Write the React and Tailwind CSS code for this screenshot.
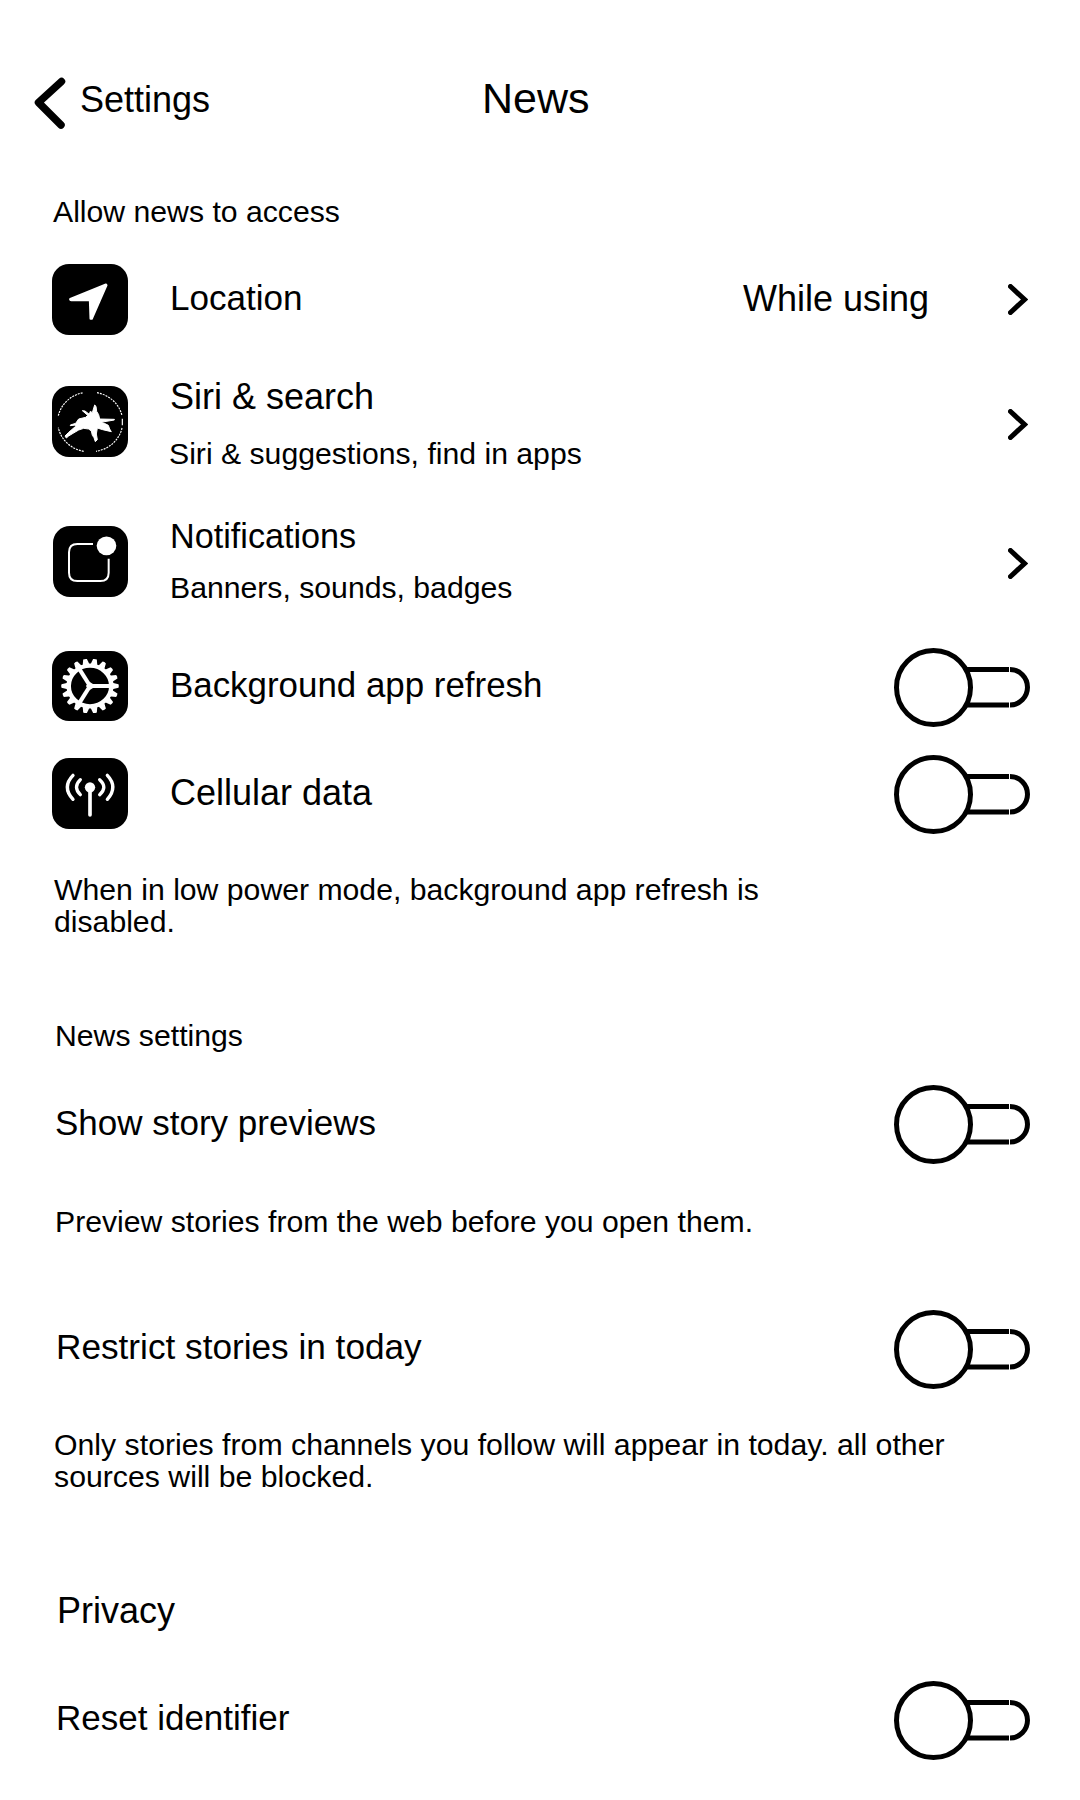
import React from "react";

function Tile({ className, viewBox, children }) {
  return (
    <div className={"shrink-0 overflow-hidden rounded-[17px] bg-black " + className}>
      <svg viewBox={viewBox} preserveAspectRatio="none" className="block h-full w-full">
        {children}
      </svg>
    </div>
  );
}

function LocationTile() {
  return (
    <Tile className="h-[71px] w-[76px]" viewBox="36 42 228 213">
      <path
        d="M198 104 L91 147 Q90 150 94 150 L150 150 L152 206 L155 206 L199 106 Z"
        fill="#fff"
        stroke="#fff"
        strokeWidth="7"
        strokeLinejoin="round"
      />
    </Tile>
  );
}

function SiriTile() {
  return (
    <Tile className="h-[71px] w-[76px]" viewBox="36 48 228 213">
      <g fill="none" stroke="#fff" strokeWidth="3.500" strokeDasharray="6 3">
        <path d="M55 137 A96 90 0 0 1 130 68" />
        <path d="M171 68 A96 90 0 0 1 246 137" />
        <path d="M247 146 V166" strokeDasharray="none" />
        <path d="M246 174 A96 90 0 0 1 168 244" />
        <path d="M131 244 A96 90 0 0 1 55 173" />
      </g>
      <path
        d="M164 105 L168 109 L170 124 L176 134 L179 147 L223 148 L223 150 L182 157 L193 160 L205 166 L209 177 L214 185 L188 179 L172 174 L169 192 L172 209 L166 215 L162 203 L157 196 L154 183 L146 177 L131 175 L116 180 L99 190 L86 198 L79 204 L75 198 L86 187 L107 169 L107 165 L91 167 L91 165 L107 160 L116 147 L137 142 L143 136 L127 122 L135 123 L148 133 L151 124 L157 128 Z"
        fill="#fff"
        stroke="#fff"
        strokeWidth="3"
        strokeLinejoin="round"
      />
    </Tile>
  );
}

function NotificationsTile() {
  return (
    <Tile className="ml-px h-[71px] w-[75px]" viewBox="39 48 225 213">
      <path
        d="M159 102 H112 Q87 102 87 127 V188 Q87 213 112 213 H181 Q206 213 206 188 V146"
        fill="none"
        stroke="#fff"
        strokeWidth="6"
      />
      <ellipse cx="199.500" cy="107.500" rx="29.500" ry="28" fill="#fff" />
    </Tile>
  );
}

const TEETH = Array.from({ length: 18 }, (_, i) => i * 20);

function GearTile() {
  return (
    <Tile className="h-[70px] w-[76px]" viewBox="36 33 228 210">
      <g transform="translate(150 138) scale(1.03 0.98)" fill="#fff">
        {TEETH.map((a) => (
          <path key={a} d="M62 -11 L83 -5.500 Q85 0 83 5.500 L62 11 Z" transform={`rotate(${a})`} />
        ))}
        <circle r="62" fill="none" stroke="#fff" strokeWidth="13" />
        <g stroke="#fff" strokeWidth="12">
          <path d="M0 0 H60" />
          <path d="M0 0 L-31 -52" />
          <path d="M0 0 L-31 52" />
        </g>
        <path d="M-12 0 L-2 -13 L10 -5 V5 L-2 13 Z" />
      </g>
    </Tile>
  );
}

function CellularTile() {
  return (
    <Tile className="h-[71px] w-[76px]" viewBox="36 39 228 213">
      <circle cx="150" cy="127" r="15.500" fill="#fff" />
      <g fill="none" stroke="#fff" strokeWidth="10" strokeLinecap="round">
        <path d="M150 127 V210" strokeWidth="11" />
        <path d="M121 104 Q98 127 121 149" />
        <path d="M99 91 Q65 126 99 163" />
        <path d="M179 104 Q204 127 179 149" />
        <path d="M202 91 Q235 126 202 163" />
      </g>
    </Tile>
  );
}

function Chevron({ className }) {
  return (
    <svg viewBox="0 0 20 31" className={"mr-[52px] block h-[31px] w-[20px] shrink-0 " + className}>
      <path d="M2.500 2.500 L16.500 15.500 L2.500 28.500" fill="none" stroke="#000" strokeWidth="5" strokeLinecap="round" />
    </svg>
  );
}

function Toggle({ className = "" }) {
  return (
    <button
      type="button"
      role="switch"
      aria-checked="false"
      className={"mr-[50px] ml-auto block h-[79px] w-[136px] shrink-0 " + className}
    >
      <svg viewBox="0 0 136 79" className="block h-full w-full" fill="none" stroke="#000">
        <path d="M72 21.500 H115 M72 57 H115" strokeWidth="5" />
        <path d="M116 21.500 A17.500 17.750 0 0 1 116 57" strokeWidth="5" />
        <circle cx="39.500" cy="39.500" r="37" fill="#fff" strokeWidth="5" />
      </svg>
    </button>
  );
}

export default function App() {
  return (
    <main className="flex h-[1800px] w-[1080px] flex-col overflow-hidden bg-white font-['Liberation_Sans',Arial,sans-serif] text-[30.200px] leading-8 text-black">
      <header className="flex h-[196px] shrink-0 items-start">
        <svg viewBox="0 0 34 54" className="mt-[76px] ml-[32px] block h-[54px] w-[34px]">
          <path d="M29.500 5.500 L6.500 26.500 L29 49" fill="none" stroke="#000" strokeWidth="7.500" strokeLinecap="round" strokeLinejoin="round" />
        </svg>
        <a className="mt-[80px] ml-[14px] w-[130px] text-[36px] leading-10 whitespace-nowrap">Settings</a>
        <h1 className="mt-[78px] ml-[272px] text-[43px] leading-10">News</h1>
      </header>

      <h2 className="ml-[53px] h-[68px] shrink-0">Allow news to access</h2>

      <section className="flex flex-col pl-[52px] whitespace-nowrap">
        <div className="flex h-[122px] items-start">
          <LocationTile />
          <span className="mt-[14px] ml-[42px] text-[35.100px] leading-10">Location</span>
          <span className="mt-[15px] mr-[79px] ml-auto text-[36px] leading-10">While using</span>
          <Chevron className="mt-[20px]" />
        </div>

        <div className="flex h-[140px] items-start">
          <SiriTile />
          <div className="-mt-[9px] ml-[41px] flex flex-1 flex-col">
            <span className="ml-px text-[36px] leading-10">Siri &amp; search</span>
            <span className="mt-[21px]">Siri &amp; suggestions, find in apps</span>
          </div>
          <Chevron className="mt-[23px]" />
        </div>

        <div className="flex h-[125px] items-start">
          <NotificationsTile />
          <div className="-mt-[10px] ml-[41px] flex flex-1 flex-col">
            <span className="ml-px text-[34.200px] leading-10">Notifications</span>
            <span className="mt-[16px] ml-px">Banners, sounds, badges</span>
          </div>
          <Chevron className="mt-[22px]" />
        </div>

        <div className="flex h-[107px] items-start">
          <GearTile />
          <span className="mt-[14px] ml-[42px] text-[34.900px] leading-10">Background app refresh</span>
          <Toggle className="-mt-[3px]" />
        </div>

        <div className="flex h-[116px] items-start">
          <CellularTile />
          <span className="mt-[15px] ml-[42px] text-[36px] leading-10">Cellular data</span>
          <Toggle className="-mt-[3px]" />
        </div>
      </section>

      <p className="ml-[54px] w-[760px] shrink-0">When in low power mode, background app refresh is disabled.</p>

      <h2 className="mt-[82px] ml-[55px] shrink-0">News settings</h2>

      <div className="mt-[33px] ml-[55px] flex shrink-0 items-start">
        <span className="mt-[18px] text-[35px] leading-10">Show story previews</span>
        <Toggle />
      </div>
      <p className="mt-[42px] ml-[55px] shrink-0">Preview stories from the web before you open them.</p>

      <div className="mt-[72px] ml-[56px] flex shrink-0 items-start">
        <span className="mt-[17px] text-[35.200px] leading-10">Restrict stories in today</span>
        <Toggle />
      </div>
      <p className="mt-[40px] ml-[54px] w-[920px] shrink-0 text-[30.250px]">
        Only stories from channels you follow will appear in today. all other sources will be blocked.
      </p>

      <h2 className="mt-[98px] ml-[57px] shrink-0 text-[36px] leading-10">Privacy</h2>
      <div className="mt-[50px] ml-[56px] flex shrink-0 items-start">
        <span className="mt-[17px] text-[35px] leading-10">Reset identifier</span>
        <Toggle />
      </div>
    </main>
  );
}
